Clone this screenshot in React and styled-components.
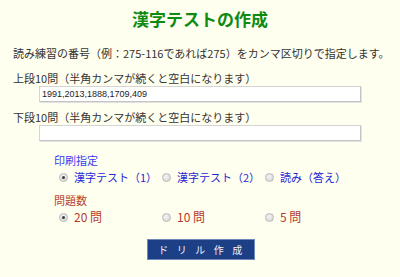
import React, { useState } from "react";
import styled, { createGlobalStyle } from "styled-components";

const GlobalStyle = createGlobalStyle`
  html, body {
    margin: 0;
    padding: 0;
    background: #fffff0;
  }
  body {
    font-family: "Noto Sans CJK JP", "Liberation Sans", sans-serif;
    color: #333;
  }
`;

const Page = styled.div`
  width: 400px;
  height: 277px;
  padding: 8px 13px 0;
  box-sizing: border-box;
  display: flex;
  flex-direction: column;
`;

const Title = styled.h1`
  margin: 0;
  font-size: 17px;
  line-height: 22px;
  font-weight: bold;
  color: #108a10;
  text-align: center;
`;

const Text = styled.p`
  margin: ${(p) => p.$top || 0}px 0 0;
  font-size: 11px;
  line-height: 16px;
  white-space: nowrap;
`;

const Field = styled.input`
  display: block;
  width: 322px;
  height: 16px;
  margin: 0 0 0 26px;
  padding: 0 2px;
  box-sizing: border-box;
  border: 1px solid #d4d4d4;
  border-right-color: #c4c4c4;
  border-bottom-color: #c4c4c4;
  box-shadow: 1px 1px 0 #e2e2e2;
  background: #fff;
  font-family: "Liberation Sans", Arial, sans-serif;
  font-size: 9px;
  color: #222;
  outline: none;
`;

const GroupTitle = styled.div`
  margin: ${(p) => p.$top}px 0 0 41px;
  font-size: 11px;
  line-height: 16px;
  color: ${(p) => p.$color};
`;

const OptionRow = styled.div`
  margin: 1px 0 0 46px;
  display: grid;
  grid-template-columns: 103px 103px 103px;
  height: 16px;
`;

const Option = styled.label`
  display: flex;
  align-items: center;
  font-size: ${(p) => p.$size || 11}px;
  line-height: 16px;
  color: ${(p) => p.$color};
  white-space: nowrap;
  cursor: pointer;
`;

const Radio = styled.input.attrs({ type: "radio" })`
  appearance: none;
  -webkit-appearance: none;
  width: 9px;
  height: 9px;
  margin: 0 6px 0 0;
  border-radius: 50%;
  border: 1px solid #b8b8b8;
  box-sizing: border-box;
  background: radial-gradient(circle at 40% 35%, #f4f4f4 0%, #dcdcdc 70%, #cfcfcf 100%);
  position: relative;
  flex: none;

  &:checked::after {
    content: "";
    position: absolute;
    left: 2px;
    top: 2px;
    width: 3px;
    height: 3px;
    border-radius: 50%;
    background: #3a3a3a;
  }
`;

const ButtonRow = styled.div`
  margin-top: 14px;
  display: flex;
  justify-content: center;
  padding-left: 1px;
`;

const Button = styled.button`
  width: 108px;
  height: 21px;
  padding: 0 0 0 8px;
  background: #1d3f86;
  border: 1px solid #6d88b9;
  color: #eef0f6;
  font-family: "Noto Sans CJK JP", sans-serif;
  font-size: 10px;
  letter-spacing: 8.5px;
  cursor: pointer;
`;

const printOptions = ["漢字テスト（1）", "漢字テスト（2）", "読み（答え）"];
const countOptions = ["20 問", "10 問", "5 問"];

export default function App() {
  const [upper, setUpper] = useState("1991,2013,1888,1709,409");
  const [lower, setLower] = useState("");
  const [print, setPrint] = useState(0);
  const [count, setCount] = useState(0);

  return (
    <>
      <GlobalStyle />
      <Page>
        <Title>漢字テストの作成</Title>
        <Text $top={15}>
          読み練習の番号（例：275-116であれば275）をカンマ区切りで指定します。
        </Text>
        <Text $top={9}>上段10問（半角カンマが続くと空白になります）</Text>
        <Field value={upper} onChange={(e) => setUpper(e.target.value)} />
        <Text $top={7}>下段10問（半角カンマが続くと空白になります）</Text>
        <Field value={lower} onChange={(e) => setLower(e.target.value)} />

        <GroupTitle $top={11} $color="#3b3bef">印刷指定</GroupTitle>
        <OptionRow>
          {printOptions.map((label, i) => (
            <Option key={label} $color="#2626d6">
              <Radio name="print" checked={print === i} onChange={() => setPrint(i)} />
              {label}
            </Option>
          ))}
        </OptionRow>

        <GroupTitle $top={7} $color="#b8432f">問題数</GroupTitle>
        <OptionRow>
          {countOptions.map((label, i) => (
            <Option key={label} $color="#b8392b" $size={12}>
              <Radio name="count" checked={count === i} onChange={() => setCount(i)} />
              {label}
            </Option>
          ))}
        </OptionRow>

        <ButtonRow>
          <Button>ドリル作成</Button>
        </ButtonRow>
      </Page>
    </>
  );
}
